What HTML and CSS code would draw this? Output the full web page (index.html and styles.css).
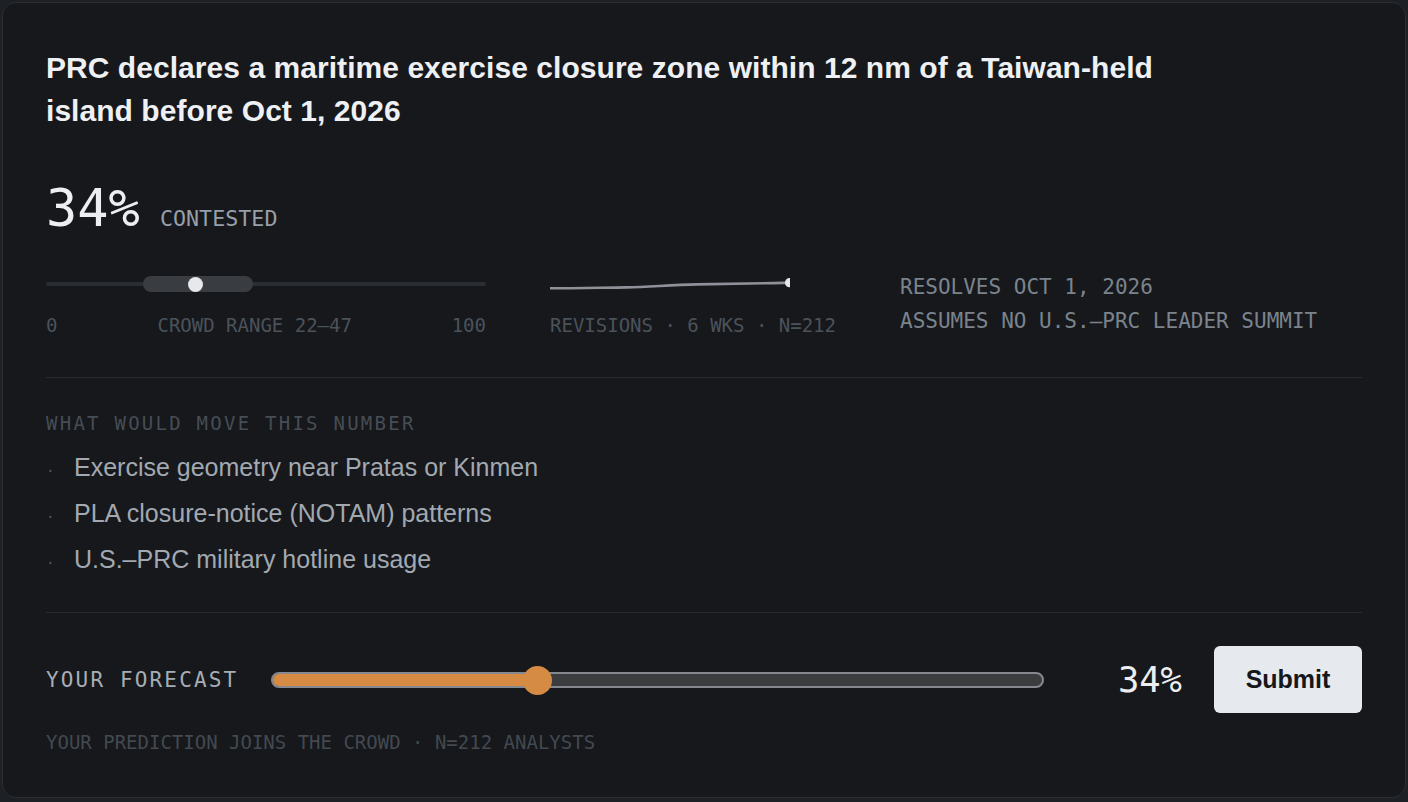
FILE: index.html
```html
<!DOCTYPE html>
<html lang="en">
<head>
  <meta charset="UTF-8" />
  <title>Forecast question</title>
  <link rel="stylesheet" href="styles.css">
</head>
<body>
  <div class="card">
    <h1 class="question">PRC declares a maritime exercise closure zone within 12 nm of a Taiwan-held island before Oct 1, 2026</h1>

    <div class="headline">
      <span class="big-pct">34%</span>
      <span class="status">CONTESTED</span>
    </div>

    <div class="stats">
      <div class="crowd">
        <div class="range">
          <div class="range-track"></div>
          <div class="range-band" style="left: 22%; width: 25%;"></div>
          <div class="range-dot" style="left: 34%;"></div>
        </div>
        <div class="range-labels">
          <span>0</span>
          <span class="range-name">CROWD RANGE 22–47</span>
          <span class="range-max">100</span>
        </div>
      </div>

      <div class="revisions">
        <svg class="spark" width="240" height="16" viewBox="0 0 240 16">
          <path d="M0 12.3 C 30 12.2, 55 11.6, 77 11.4 S 120 8.8, 147 8.4 S 195 7.5, 213 7.3 S 232 6.8, 239 6.7" fill="none" stroke="#8e9298" stroke-width="2.6" stroke-linecap="round" />
          <circle cx="239.5" cy="6.7" r="4.6" fill="#e4e6ea" />
        </svg>
        <div class="muted-label">REVISIONS · 6 WKS · N=212</div>
      </div>

      <div class="meta">
        <div>RESOLVES OCT 1, 2026</div>
        <div>ASSUMES NO U.S.–PRC LEADER SUMMIT</div>
      </div>
    </div>

    <hr class="divider">

    <div class="drivers">
      <div class="section-label">WHAT WOULD MOVE THIS NUMBER</div>
      <ul class="driver-list">
        <li><span class="dot">·</span>Exercise geometry near Pratas or Kinmen</li>
        <li><span class="dot">·</span>PLA closure-notice (NOTAM) patterns</li>
        <li><span class="dot">·</span>U.S.–PRC military hotline usage</li>
      </ul>
    </div>

    <hr class="divider">

    <div class="forecast">
      <span class="forecast-label">YOUR FORECAST</span>
      <div class="slider">
        <div class="slider-track">
          <div class="slider-fill" style="width: 34.5%;"></div>
        </div>
        <div class="slider-thumb" style="left: 34.5%;"></div>
      </div>
      <span class="forecast-value">34%</span>
      <button class="submit">Submit</button>
    </div>

    <div class="footnote">YOUR PREDICTION JOINS THE CROWD · N=212 ANALYSTS</div>
  </div>
</body>
</html>
```

FILE: styles.css
```css
body {
  margin: 0;
  padding: 2px;
  background: #1d2024;
  font-family: "Liberation Sans", Arial, sans-serif;
}

.card {
  background: #16181c;
  border: 1px solid #2b2e33;
  border-radius: 14px;
  padding: 43px 43px 44px 43px;
  height: 796px;
  box-sizing: border-box;
}

.question {
  margin: 0;
  max-width: 1180px;
  font-size: 30px;
  line-height: 43px;
  font-weight: bold;
  letter-spacing: 0.05px;
  color: #eef0f3;
}

/* big number + status */
.headline {
  margin-top: 50px;
  display: flex;
  align-items: baseline;
  gap: 20px;
  font-family: "DejaVu Sans Mono", monospace;
  line-height: 1;
}

.big-pct {
  font-size: 52px;
  color: #eceef1;
  line-height: 52px;
}

.status {
  font-size: 21.7px;
  color: #979fa9;
}

/* crowd range / revisions / meta */
.stats {
  margin-top: 36px;
  display: grid;
  grid-template-columns: 440px 286px auto;
  column-gap: 64px;
  align-items: start;
  font-family: "DejaVu Sans Mono", monospace;
}

.crowd, .revisions {
  padding-top: 6px;
}

.range {
  position: relative;
  height: 16px;
}

.range-track {
  position: absolute;
  left: 0;
  right: 0;
  top: 6px;
  height: 4px;
  border-radius: 2px;
  background: #2a2d32;
}

.range-band {
  position: absolute;
  top: 0;
  height: 16px;
  border-radius: 8px;
  background: #393c41;
}

.range-dot {
  position: absolute;
  top: 0.5px;
  width: 15px;
  height: 15px;
  margin-left: -7.5px;
  border-radius: 50%;
  background: #e6e8ec;
}

.range-labels {
  margin-top: 20.5px;
  display: flex;
  font-size: 19px;
  line-height: 24px;
  color: #4b525a;
}

.range-name {
  margin-left: 100px;
}

.range-max {
  margin-left: auto;
}

.spark {
  display: block;
}

.muted-label {
  margin-top: 20.5px;
  font-size: 19px;
  line-height: 24px;
  color: #4b525a;
  white-space: nowrap;
}

.meta {
  font-size: 21px;
  line-height: 34px;
  color: #7b838d;
  white-space: nowrap;
}

.divider {
  border: none;
  border-top: 1px solid #272a2f;
  margin: 39px 0 0 0;
}

/* drivers list */
.drivers {
  margin-top: 33px;
}

.section-label {
  font-family: "DejaVu Sans Mono", monospace;
  font-size: 19px;
  line-height: 24px;
  letter-spacing: 2.25px;
  color: #474d55;
}

.driver-list {
  list-style: none;
  margin: 9px 0 0 0;
  padding: 0;
}

.driver-list li {
  font-size: 25px;
  line-height: 46px;
  height: 46px;
  color: #a2a9b1;
}

.driver-list .dot {
  display: inline-block;
  width: 27px;
  padding-left: 1px;
  line-height: 1;
  color: #4c525a;
  font-size: 20px;
}

.drivers + .divider {
  margin-top: 30px;
}

/* your forecast row */
.forecast {
  margin-top: 33px;
  display: flex;
  align-items: center;
  height: 67px;
}

.forecast-label {
  font-family: "DejaVu Sans Mono", monospace;
  font-size: 21px;
  letter-spacing: 2.15px;
  color: #a6adb5;
  margin-right: 33px;
  white-space: nowrap;
}

.slider {
  position: relative;
  flex: 1;
  height: 28px;
}

.slider-track {
  position: absolute;
  left: 0;
  right: 0;
  top: 6px;
  height: 16px;
  box-sizing: border-box;
  border: 2px solid #85888c;
  border-radius: 8px;
  background: #3b3c3e;
  overflow: hidden;
}

.slider-fill {
  height: 100%;
  background: #d68b45;
}

.slider-thumb {
  position: absolute;
  top: 0;
  width: 29px;
  height: 29px;
  margin-left: -14.5px;
  border-radius: 50%;
  background: #d68b45;
}

.forecast-value {
  width: 106px;
  margin-left: 32px;
  text-align: right;
  font-family: "DejaVu Sans Mono", monospace;
  font-size: 35.5px;
  color: #eceef1;
}

.submit {
  margin-left: 32px;
  width: 148px;
  height: 67px;
  border: none;
  border-radius: 6px;
  background: #e6e9ee;
  color: #15171a;
  font-family: "Liberation Sans", Arial, sans-serif;
  font-weight: bold;
  font-size: 25px;
  cursor: pointer;
}

.footnote {
  margin-top: 17px;
  font-family: "DejaVu Sans Mono", monospace;
  font-size: 19px;
  line-height: 24px;
  color: #434950;
}
```
